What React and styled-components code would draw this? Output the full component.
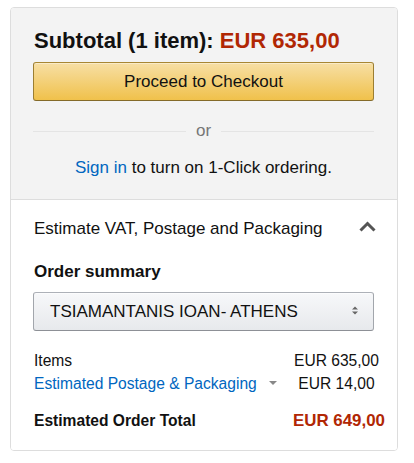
import React from 'react'
import styled, { createGlobalStyle } from 'styled-components'

const GlobalStyle = createGlobalStyle`
  body {
    margin: 0;
    background: #fff;
    font-family: "Liberation Sans", Arial, sans-serif;
    color: #111;
  }
`

const Card = styled.div`
  margin: 7px 0 0 10px;
  width: 386px;
  border: 1px solid #ddd;
  border-radius: 4px;
  overflow: hidden;
`

const TopSection = styled.div`
  background: #f3f3f3;
  padding: 20px 23px 21px 22px;
  border-bottom: 1px solid #ddd;
`

const Subtotal = styled.div`
  font-size: 22px;
  font-weight: 700;
  line-height: 26px;
  padding-left: 1px;
  white-space: nowrap;
`

const Price = styled.span`
  color: #b12704;
  font-size: ${p => p.size || 'inherit'};
  font-weight: 700;
`

const CheckoutButton = styled.button`
  display: block;
  width: 100%;
  height: 39px;
  margin-top: 8px;
  border: 1px solid;
  border-color: #a88734 #9c7e31 #846a29;
  border-radius: 3px;
  background: linear-gradient(to bottom, #f7dfa5, #f0c14b);
  box-shadow: 0 1px 0 rgba(255, 255, 255, 0.4) inset;
  font-family: "Liberation Sans", Arial, sans-serif;
  font-size: 17px;
  color: #111;
  cursor: pointer;
`

const OrDivider = styled.div`
  display: flex;
  align-items: center;
  gap: 10px;
  margin-top: 20px;
  height: 20px;
  font-size: 17px;
  line-height: 20px;
  color: #767676;
  &::before, &::after {
    content: '';
    flex: 1;
    height: 1px;
    background: #e4e4e4;
  }
`

const SignInLine = styled.div`
  margin-top: 17px;
  text-align: center;
  font-size: 17px;
  line-height: 20px;
`

const Link = styled.a`
  color: #0066c0;
  text-decoration: none;
  cursor: pointer;
`

const BottomSection = styled.div`
  background: #fff;
  padding: 19px 23px 18px 23px;
`

const EstimateRow = styled.div`
  display: flex;
  align-items: center;
  justify-content: space-between;
  font-size: 17px;
  line-height: 20px;
`

const Chevron = styled.svg`
  width: 19px;
  height: 11px;
  margin-right: -3px;
  margin-top: -6px;
`

const Heading = styled.div`
  margin-top: 23px;
  font-size: 17px;
  font-weight: 700;
  line-height: 20px;
`

const SelectBox = styled.div`
  position: relative;
  margin-top: 10px;
  margin-left: -1px;
  height: 37px;
  border: 1px solid;
  border-color: #adb1b8 #a2a6ac #8d9096;
  border-radius: 3px;
  background: linear-gradient(to bottom, #f7f8fa, #e7e9ec);
  box-shadow: 0 1px 0 rgba(255, 255, 255, 0.6) inset;
  display: flex;
  align-items: center;
  padding-left: 16px;
  font-size: 17px;
  color: #111;
`

const SelectArrows = styled.svg`
  position: absolute;
  right: 15px;
  top: 50%;
  margin-top: -6px;
  width: 6px;
  height: 9px;
`

const SummaryRow = styled.div`
  display: grid;
  grid-template-columns: 1fr 93px;
  margin-right: -9px;
  margin-top: ${p => p.gap || '0px'};
  font-size: 15.6px;
  line-height: 22.6px;
`

const Amount = styled.span`
  text-align: center;
  white-space: nowrap;
`

const DropTriangle = styled.span`
  display: inline-block;
  margin-left: 12px;
  vertical-align: middle;
  margin-top: -3px;
  border-left: 4px solid transparent;
  border-right: 4px solid transparent;
  border-top: 4px solid #888;
`

const TotalRow = styled.div`
  display: flex;
  justify-content: space-between;
  align-items: baseline;
  margin-top: 14px;
  margin-right: -11px;
  line-height: 23px;
  font-weight: 700;
  font-size: 15.6px;
`

function App() {
  return (
    <>
      <GlobalStyle />
      <Card>
        <TopSection>
          <Subtotal>
            Subtotal (1 item): <Price>EUR 635,00</Price>
          </Subtotal>
          <CheckoutButton>Proceed to Checkout</CheckoutButton>
          <OrDivider>or</OrDivider>
          <SignInLine>
            <Link>Sign in</Link> to turn on 1-Click ordering.
          </SignInLine>
        </TopSection>

        <BottomSection>
          <EstimateRow>
            <span>Estimate VAT, Postage and Packaging</span>
            <Chevron viewBox="0 0 19 11">
              <path d="M2.5 9.5 L9.5 2.5 L16.5 9.5" fill="none" stroke="#555" strokeWidth="3" />
            </Chevron>
          </EstimateRow>

          <Heading>Order summary</Heading>
          <SelectBox>
            TSIAMANTANIS IOAN- ATHENS
            <SelectArrows viewBox="0 0 6 9">
              <path d="M0 3.5 L3 0.5 L6 3.5 Z M0 5.5 L3 8.5 L6 5.5 Z" fill="#666" />
            </SelectArrows>
          </SelectBox>

          <SummaryRow gap="19px">
            <span>Items</span>
            <Amount>EUR 635,00</Amount>
          </SummaryRow>
          <SummaryRow>
            <span>
              <Link>Estimated Postage &amp; Packaging</Link>
              <DropTriangle />
            </span>
            <Amount>EUR 14,00</Amount>
          </SummaryRow>

          <TotalRow>
            <span>Estimated Order Total</span>
            <Price size="16.9px">EUR 649,00</Price>
          </TotalRow>
        </BottomSection>
      </Card>
    </>
  )
}

export default App
